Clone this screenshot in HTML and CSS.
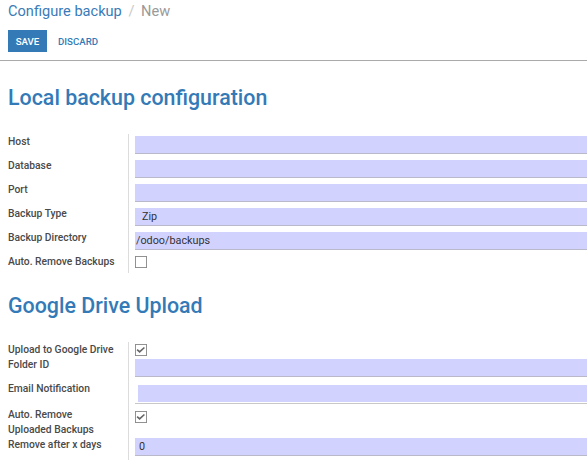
FILE: index.html
```html
<!DOCTYPE html>
<html>
<head>
<meta charset="utf-8">
<link rel="stylesheet" href="styles.css">
</head>
<body>
<div class="control-panel">
  <div class="breadcrumb">
    <span class="crumb-link">Configure backup</span>
    <span class="crumb-sep">/</span>
    <span class="crumb-active">New</span>
  </div>
  <div class="buttons">
    <button class="btn btn-primary">SAVE</button>
    <button class="btn btn-link">DISCARD</button>
  </div>
</div>
<div class="sheet">
  <h1 class="section-title first">Local backup configuration</h1>
  <div class="group">
    <div class="label">Host</div>
    <div class="field"><div class="input"></div></div>

    <div class="label">Database</div>
    <div class="field"><div class="input"></div></div>

    <div class="label">Port</div>
    <div class="field"><div class="input"></div></div>

    <div class="label">Backup Type</div>
    <div class="field"><div class="input select">Zip</div></div>

    <div class="label">Backup Directory</div>
    <div class="field"><div class="input text">/odoo/backups</div></div>

    <div class="label">Auto. Remove Backups</div>
    <div class="field field-check last">
      <svg class="checkbox" width="13" height="13" viewBox="0 0 13 13"><rect x="0.5" y="0.5" width="12" height="12" fill="#fff" stroke="#8a8a8a"/></svg>
    </div>
  </div>

  <h1 class="section-title second">Google Drive Upload</h1>
  <div class="group">
    <div class="label">Upload to Google Drive</div>
    <div class="field field-check tight">
      <svg class="checkbox" width="13" height="13" viewBox="0 0 13 13"><rect x="0.5" y="0.5" width="12" height="12" fill="#fff" stroke="#8a8a8a"/><path d="M2.3 6.2 L5 8.6 L10.2 3.8" stroke="#666" stroke-width="1.8" fill="none"/></svg>
    </div>

    <div class="label">Folder ID</div>
    <div class="field"><div class="input"></div></div>

    <div class="label">Email Notification</div>
    <div class="field field-m2m"><div class="m2m"><div class="input plain"></div></div></div>

    <div class="label">Auto. Remove<br>Uploaded Backups</div>
    <div class="field field-check check-low">
      <svg class="checkbox" width="13" height="13" viewBox="0 0 13 13"><rect x="0.5" y="0.5" width="12" height="12" fill="#fff" stroke="#8a8a8a"/><path d="M2.3 6.2 L5 8.6 L10.2 3.8" stroke="#666" stroke-width="1.8" fill="none"/></svg>
    </div>

    <div class="label">Remove after x days</div>
    <div class="field field-last"><div class="input num">0</div></div>
  </div>
</div>
</body>
</html>
```
FILE: styles.css
```css
* { box-sizing: border-box; }
html, body { margin: 0; padding: 0; background: #fff; overflow: hidden; }
body {
  font-family: Roboto, "Liberation Sans", sans-serif;
  color: #4c4c4c;
  width: 587px;
}
.control-panel {
  padding: 0 0 0 8px;
  border-bottom: 1px solid #aaa;
  height: 61px;
}
.breadcrumb {
  font-size: 14.6px;
  line-height: 22px;
  height: 22px;
  white-space: nowrap;
}
.crumb-link { color: #3a7bb7; }
.crumb-sep { color: #c8c8c8; margin: 0 3px; }
.crumb-active { color: #9a9a9a; }
.buttons {
  margin-top: 8px;
  display: flex;
  gap: 3px;
}
.btn {
  font-family: Roboto, "Liberation Sans", sans-serif;
  font-size: 9.7px;
  font-weight: 500;
  height: 22px;
  padding: 0 8px;
  border: none;
  border-radius: 0;
  cursor: pointer;
}
.btn-primary { background: #337ab7; color: #fff; width: 39px; padding: 0; }
.btn-link { background: transparent; color: #337ab7; }

.sheet { padding-left: 8px; }
.section-title {
  font-size: 21.4px;
  line-height: 28px;
  font-weight: 500;
  color: #337ab7;
  margin: 0;
  white-space: nowrap;
}
.section-title.first { margin-top: 23px; margin-bottom: 22px; }
.section-title.second { margin-top: 19px; margin-bottom: 22px; }

.group {
  display: grid;
  grid-template-columns: 120px 1fr;
}
.label {
  font-size: 10.3px;
  line-height: 15px;
  font-weight: 500;
  color: #4a4a4a;
  white-space: nowrap;
}
.field {
  border-left: 1px solid #dcdcdc;
  padding: 2px 0 4px 6px;
}
.input {
  height: 18px;
  background: #d2d2ff;
  border-bottom: 1px solid #b9b9c9;
  font-size: 10.8px;
  line-height: 17px;
  color: #333;
}
.input.select { padding-left: 7px; }
.input.text { padding-left: 1px; }
.input.num { padding-left: 4px; }
.input.plain { height: 17px; border-bottom: none; }
.checkbox { display: block; width: 12px; height: 12px; }
.field-check.last { padding: 2px 0 5px 6px; }
.field-check.tight { padding: 2px 0 1px 6px; }
.field-check.check-low { padding: 4px 0 0 6px; }
.field-m2m { padding: 4px 0 3px 6px; }
.m2m {
  padding: 0 0 1px 3px;
  border-bottom: 1px solid #c8c8c8;
}
.field-last { padding: 1px 0 4px 6px; }
```
